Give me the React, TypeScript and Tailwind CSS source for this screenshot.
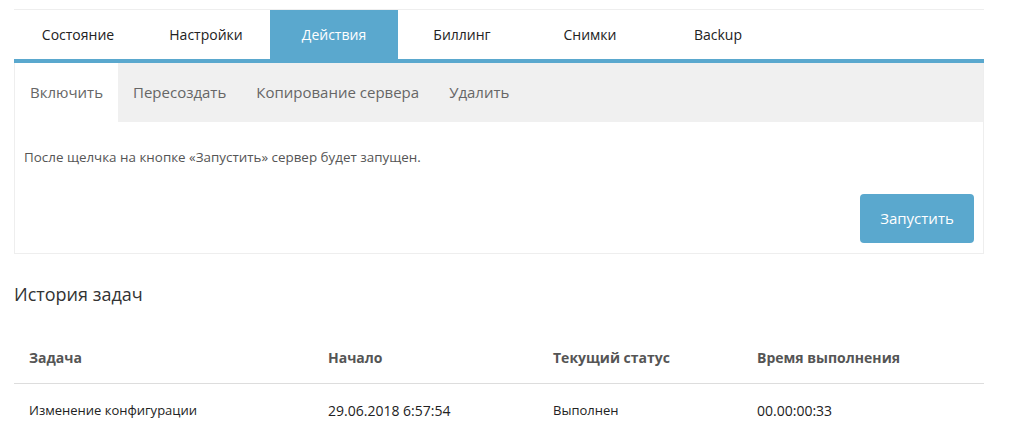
import React from "react";

const tabs = ["Состояние", "Настройки", "Действия", "Биллинг", "Снимки", "Backup"];
const subTabs = ["Включить", "Пересоздать", "Копирование сервера", "Удалить"];

export default function App() {
  return (
    <div className="min-h-[429px] bg-white pt-[9px] px-[14px]" style={{ fontFamily: '"Open Sans", "Noto Sans", sans-serif' }}>
      <div className="w-[970px]">
        <div className="flex h-[54px] border-t border-[#eee] border-b-4 border-b-[#5aa8ce]">
          {tabs.map((t, i) => (
            <div
              key={t}
              className={
                i === 2
                  ? "w-[128px] flex items-center justify-center bg-[#5aa8ce] text-white text-[14px]"
                  : "w-[128px] flex items-center justify-center text-[#222] text-[14px]"
              }
            >
              {t}
            </div>
          ))}
        </div>
        <div className="border border-t-0 border-[#eee]">
          <div className="flex h-[59px] bg-[#f0f0f0]">
            {subTabs.map((t, i) => (
              <div
                key={t}
                className={
                  i === 0
                    ? "flex items-center px-[15px] bg-white text-[#666] text-[15px]"
                    : "flex items-center px-[15px] text-[#666] text-[15px]"
                }
              >
                {t}
              </div>
            ))}
          </div>
          <div className="px-[9px] pt-[26px] pb-[10px]">
            <p className="text-[13.4px] leading-[18px] text-[#555]">
              После щелчка на кнопке «Запустить» сервер будет запущен.
            </p>
            <div className="flex justify-end mt-[28px]">
              <button className="w-[114px] h-[49px] rounded-[4px] bg-[#5aa8ce] text-white text-[15px]">
                Запустить
              </button>
            </div>
          </div>
        </div>
        <h2 className="mt-[26px] text-[18px] leading-[28px] text-[#333]">История задач</h2>
        <table className="mt-[25px] w-full border-collapse text-[14px]">
          <thead>
            <tr className="h-[50px] border-b border-[#ddd]">
              <th className="w-[299px] text-left font-bold pl-[15px] text-[#555]">Задача</th>
              <th className="w-[225px] text-left font-bold pl-[15px] text-[#555]">Начало</th>
              <th className="w-[204px] text-left font-bold pl-[15px] text-[#555]">Текущий статус</th>
              <th className="text-left font-bold pl-[15px] text-[#555]">Время выполнения</th>
            </tr>
          </thead>
          <tbody>
            <tr className="h-[54px]">
              <td className="pl-[15px] text-[#222] text-[13px]">Изменение конфигурации</td>
              <td className="pl-[15px] text-[#222] text-[14px]">29.06.2018 6:57:54</td>
              <td className="pl-[15px] text-[#222] text-[13px]">Выполнен</td>
              <td className="pl-[15px] text-[#222] text-[14px]">00.00:00:33</td>
            </tr>
          </tbody>
        </table>
      </div>
    </div>
  );
}
